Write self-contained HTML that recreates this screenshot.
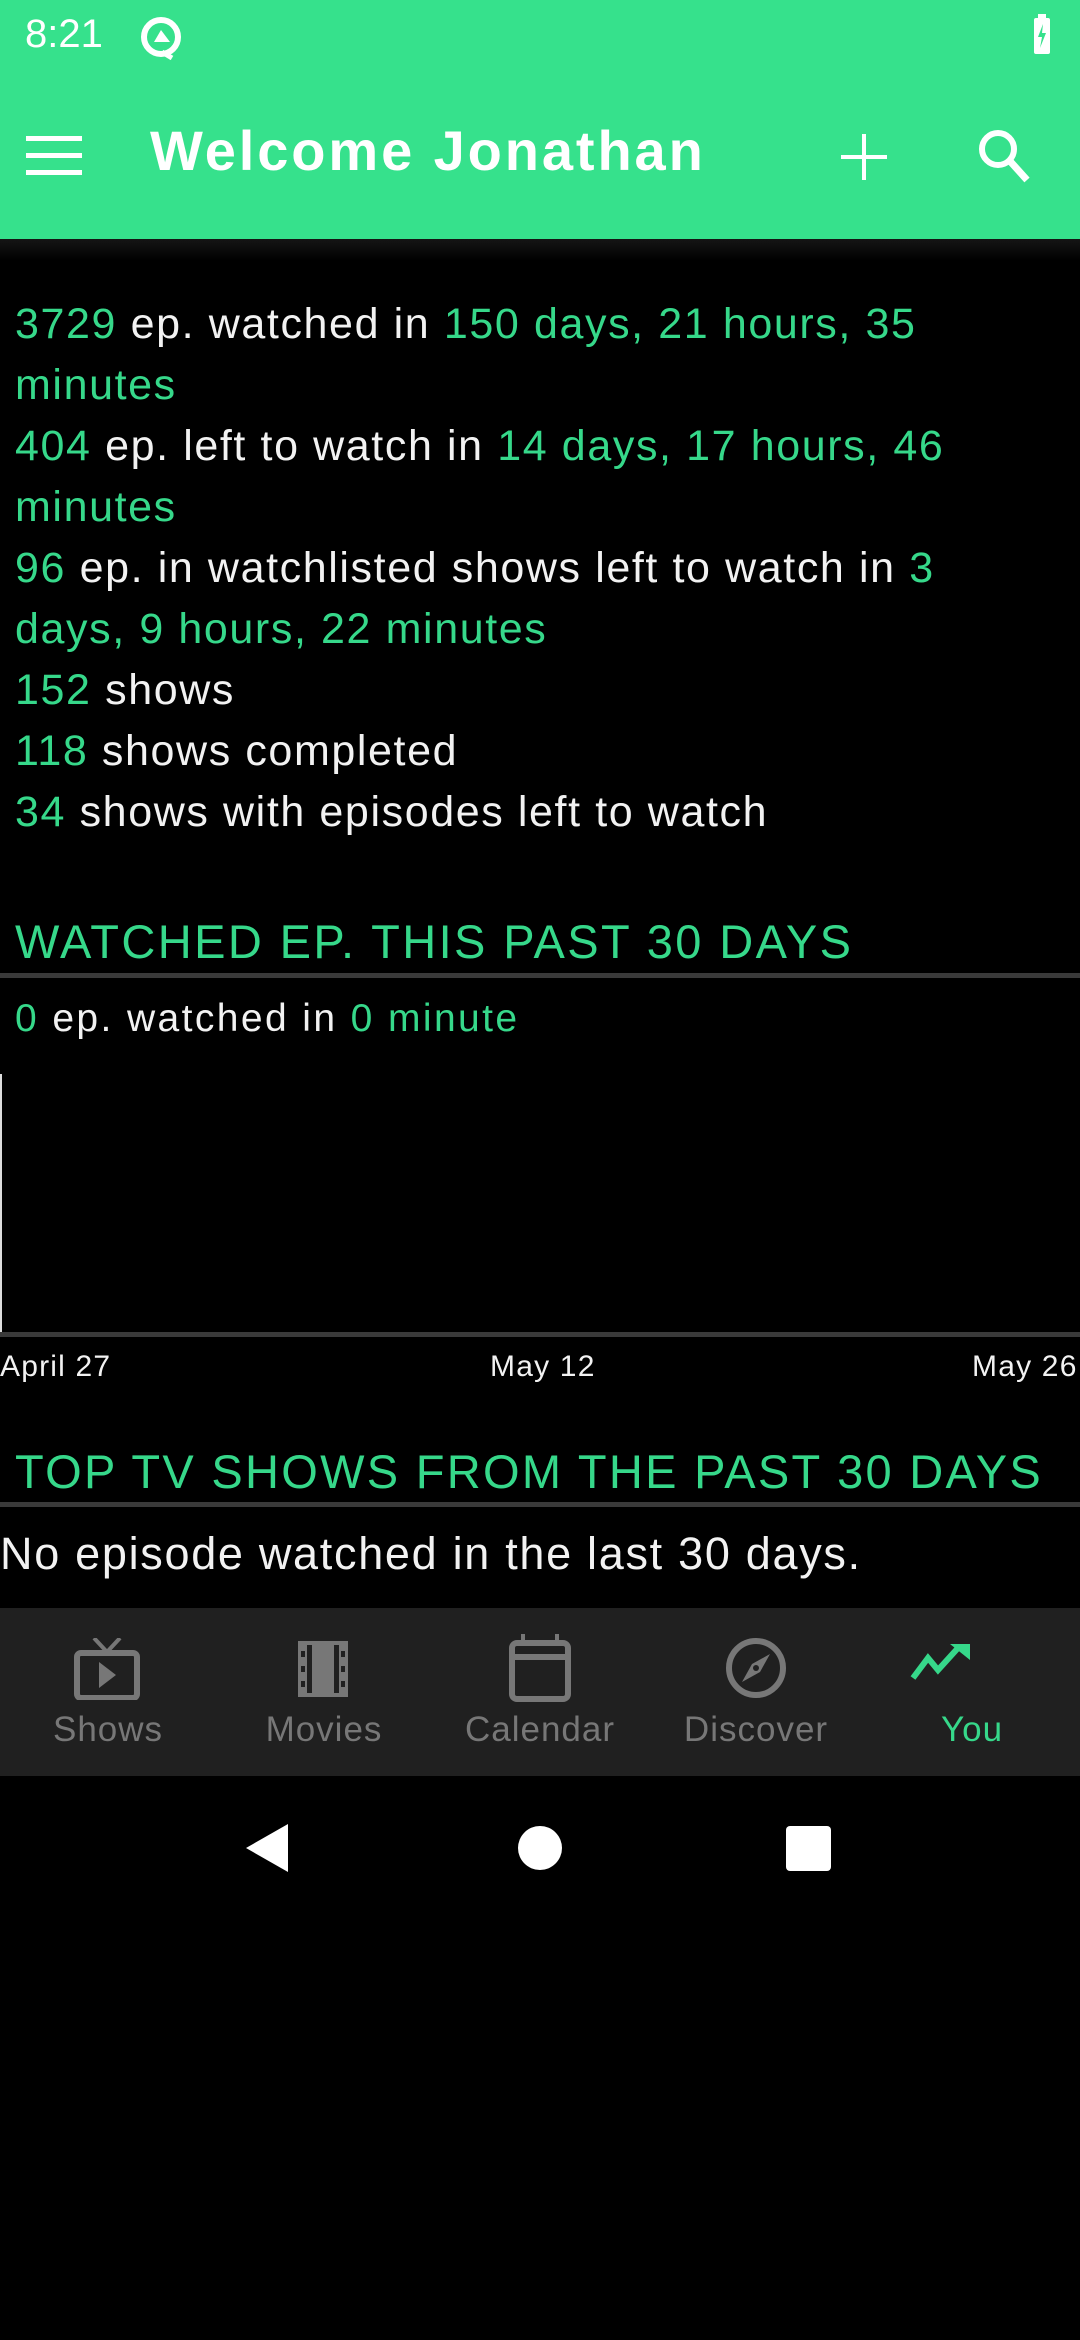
<!DOCTYPE html>
<html><head><meta charset="utf-8"><style>
*{margin:0;padding:0;box-sizing:border-box}
body{width:1080px;height:2340px;background:#000;position:relative;overflow:hidden;font-family:"Liberation Sans",sans-serif;color:#f2f2f2}
.g{color:#36d88a}
.abs{position:absolute}
#top{left:0;top:0;width:1080px;height:239px;background:#36e18c}
.line{position:absolute;left:15px;font-size:43px;line-height:61px;white-space:nowrap;letter-spacing:1.6px;top:2px}
.hdr{position:absolute;left:15px;font-size:47px;color:#36d88a;white-space:nowrap;letter-spacing:2.4px}
.rule{position:absolute;left:0;width:1080px;height:5px;background:#3a3a3a}
.nav{position:absolute;top:1608px;left:0;width:1080px;height:168px;background:#202020}
.lbl{position:absolute;top:1710px;font-size:35px;color:#777;width:216px;text-align:center;letter-spacing:1px}
</style></head><body>
<div id="top" class="abs"></div>
<div class="abs" style="left:25px;top:12px;font-size:40px;color:#fff">8:21</div>
<svg class="abs" style="left:138px;top:14px" width="46" height="46" viewBox="0 0 46 46"><circle cx="23" cy="23" r="17" fill="none" stroke="#fff" stroke-width="6"/><path d="M23 16 L32 28 L16 28Z" fill="#fff"/><path d="M24 38 L34 44" stroke="#fff" stroke-width="5"/></svg>
<svg class="abs" style="left:1030px;top:14px" width="24" height="42" viewBox="0 0 24 42"><rect x="4" y="4" width="16" height="36" rx="2" fill="#fff"/><rect x="8" y="0" width="8" height="5" fill="#fff"/><path d="M13 10 L8 23 L12 23 L10 34 L16 19 L12 19Z" fill="#36e18c"/></svg>
<svg class="abs" style="left:26px;top:136px" width="56" height="40"><rect y="0" width="56" height="5" fill="#fff"/><rect y="17" width="56" height="5" fill="#fff"/><rect y="34" width="56" height="5" fill="#fff"/></svg>
<div class="abs" style="left:150px;top:118px;font-size:56px;font-weight:bold;color:#fff;letter-spacing:2.9px">Welcome Jonathan</div>
<svg class="abs" style="left:841px;top:134px" width="46" height="46"><rect x="21" y="0" width="4" height="46" fill="#fff"/><rect x="0" y="21" width="46" height="4" fill="#fff"/></svg>
<svg class="abs" style="left:975px;top:126px" width="60" height="60" viewBox="0 0 60 60"><circle cx="23" cy="23" r="16" fill="none" stroke="#fff" stroke-width="6"/><path d="M34 34 L52 54" stroke="#fff" stroke-width="7"/></svg>
<div class="abs" style="left:0;top:239px;width:1080px;height:22px;background:linear-gradient(#151515,#000)"></div>

<div class="line" style="top:294px"><span class="g">3729</span> ep. watched in <span class="g">150 days, 21 hours, 35</span></div>
<div class="line g" style="top:355px">minutes</div>
<div class="line" style="top:416px"><span class="g">404</span> ep. left to watch in <span class="g">14 days, 17 hours, 46</span></div>
<div class="line g" style="top:477px">minutes</div>
<div class="line" style="top:538px"><span class="g">96</span> ep. in watchlisted shows left to watch in <span class="g">3</span></div>
<div class="line g" style="top:599px">days, 9 hours, 22 minutes</div>
<div class="line" style="top:660px"><span class="g">152</span> shows</div>
<div class="line" style="top:721px"><span class="g">118</span> shows completed</div>
<div class="line" style="top:782px"><span class="g">34</span> shows with episodes left to watch</div>

<div class="hdr" style="top:914px">WATCHED EP. THIS PAST 30 DAYS</div>
<div class="rule" style="top:973px"></div>
<div class="abs" style="left:15px;top:997px;font-size:39px;letter-spacing:2.4px"><span class="g">0</span> ep. watched in <span class="g">0 minute</span></div>
<div class="abs" style="left:0;top:1074px;width:2px;height:258px;background:#ddd"></div>
<div class="rule" style="top:1332px"></div>
<div class="abs" style="left:0;top:1350px;font-size:30px;letter-spacing:1.2px">April 27</div>
<div class="abs" style="left:490px;top:1350px;font-size:30px;letter-spacing:1.2px">May 12</div>
<div class="abs" style="left:972px;top:1350px;font-size:30px;letter-spacing:1.2px">May 26</div>

<div class="hdr" style="top:1444px;letter-spacing:2.3px">TOP TV SHOWS FROM THE PAST 30 DAYS</div>
<div class="rule" style="top:1502px"></div>
<div class="abs" style="left:0;top:1528px;font-size:45px;letter-spacing:1.7px">No episode watched in the last 30 days.</div>

<div class="nav"></div>
<svg class="abs" style="left:74px;top:1638px" width="66" height="62" viewBox="0 0 66 62"><path d="M20 0 L33 14 L46 0" stroke="#777" stroke-width="4" fill="none"/><rect x="3" y="15" width="60" height="45" rx="4" fill="none" stroke="#777" stroke-width="6"/><path d="M25 24 L42 37 L25 50Z" fill="#777"/></svg>
<svg class="abs" style="left:298px;top:1641px" width="50" height="56"><rect x="0" y="0" width="50" height="56" fill="#777"/><rect x="9" y="4" width="32" height="48" fill="#202020"/><rect x="14" y="0" width="22" height="56" fill="#777"/><rect x="3" y="10" width="4" height="6" fill="#202020"/><rect x="3" y="25" width="4" height="6" fill="#202020"/><rect x="3" y="40" width="4" height="6" fill="#202020"/><rect x="43" y="10" width="4" height="6" fill="#202020"/><rect x="43" y="25" width="4" height="6" fill="#202020"/><rect x="43" y="40" width="4" height="6" fill="#202020"/></svg>
<svg class="abs" style="left:509px;top:1634px" width="62" height="68"><rect x="3" y="9" width="56" height="56" rx="5" fill="none" stroke="#777" stroke-width="6"/><rect x="3" y="20" width="56" height="6" fill="#777"/><rect x="12" y="0" width="4" height="12" fill="#777"/><rect x="46" y="0" width="4" height="12" fill="#777"/></svg>
<svg class="abs" style="left:724px;top:1636px" width="64" height="64" viewBox="0 0 64 64"><circle cx="32" cy="32" r="27" fill="none" stroke="#777" stroke-width="6"/><path d="M46 18 L36 36 L28 28Z M18 46 L28 28 L36 36Z" fill="#777"/><circle cx="32" cy="32" r="3" fill="#202020"/></svg>
<svg class="abs" style="left:910px;top:1642px" width="62" height="40" viewBox="0 0 62 40"><path d="M3 36 L18 16 L28 28 L48 6" stroke="#36d88a" stroke-width="6" fill="none"/><path d="M40 2 L60 2 L60 18Z" fill="#36d88a"/></svg>
<div class="lbl" style="left:0">Shows</div>
<div class="lbl" style="left:216px">Movies</div>
<div class="lbl" style="left:432px">Calendar</div>
<div class="lbl" style="left:648px">Discover</div>
<div class="lbl" style="left:864px;color:#36d88a">You</div>

<svg class="abs" style="left:244px;top:1824px" width="46" height="48"><path d="M44 0 L44 48 L2 24Z" fill="#fff"/></svg>
<div class="abs" style="left:518px;top:1826px;width:44px;height:44px;border-radius:50%;background:#fff"></div>
<div class="abs" style="left:786px;top:1826px;width:45px;height:45px;border-radius:4px;background:#fff"></div>
</body></html>
